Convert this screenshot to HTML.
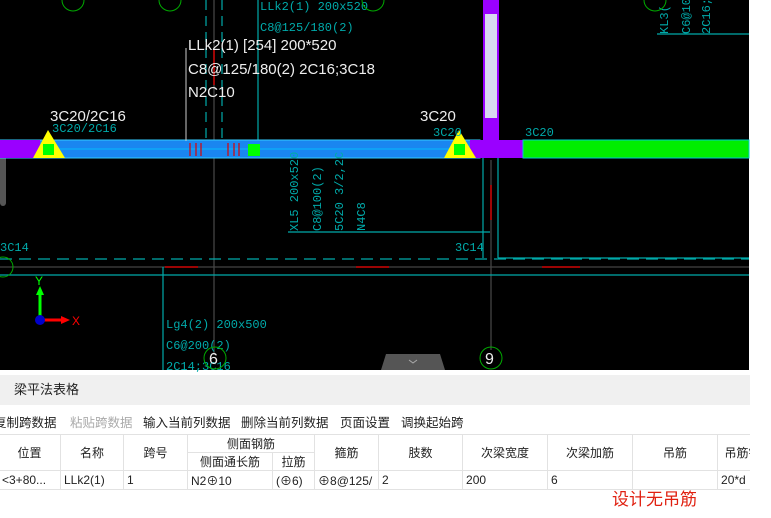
<html><head><style>
body{margin:0;width:771px;height:518px;overflow:hidden;background:#fff;font-family:"Liberation Sans","Noto Sans CJK SC",sans-serif;position:relative}
.cad{position:absolute;left:0;top:0}
.panel{position:absolute;left:0;top:372px;width:750px;height:146px;background:#fff;overflow:hidden}
.title{position:absolute;left:0;top:3px;width:750px;height:30px;background:#f0f0f0;font-size:13px;line-height:30px;color:#222}
.tb{position:absolute;top:40px;left:-6px;font-size:12.5px;color:#222;white-space:nowrap}
.tb span{position:absolute;top:0}
table{position:absolute;left:-2px;top:62px;width:769px;border-collapse:collapse;font-size:12px;color:#222;table-layout:fixed}
td{border:1px solid #e2e2e2;padding:0 3px;height:16px;text-align:center;white-space:nowrap;overflow:hidden}
tr.d td{height:19px;text-align:left}
</style></head><body>
<svg class="cad" width="771" height="372" font-family="Liberation Mono,monospace">
<rect width="749" height="370" fill="#000"/>
<rect x="0" y="148" width="6" height="58" rx="3" fill="#555"/>
<g stroke="#444" stroke-width="1.3"><line x1="214" y1="0" x2="214" y2="355"/><line x1="491" y1="160" x2="491" y2="350"/><line x1="0" y1="267" x2="749" y2="267"/></g>
<g stroke="#0aa" stroke-width="1.2" fill="none">
<line x1="206" y1="0" x2="206" y2="141" stroke-dasharray="10,6"/><line x1="222" y1="0" x2="222" y2="141" stroke-dasharray="10,6"/>
<line x1="258" y1="0" x2="258" y2="141"/>
<line x1="0" y1="259" x2="749" y2="259" stroke-dasharray="12,7"/>
<line x1="0" y1="275" x2="749" y2="275"/>
<line x1="163" y1="267" x2="163" y2="370"/>
<line x1="288" y1="232" x2="490" y2="232"/>
<line x1="483" y1="158" x2="483" y2="258"/><line x1="498" y1="158" x2="498" y2="258"/><line x1="498" y1="258" x2="749" y2="258"/>
<line x1="657" y1="34" x2="749" y2="34"/>
</g>
<g stroke="#c00" stroke-width="1.5"><line x1="214" y1="50" x2="214" y2="85"/><line x1="491" y1="185" x2="491" y2="220"/><line x1="165" y1="267" x2="198" y2="267"/><line x1="356" y1="267" x2="389" y2="267"/><line x1="542" y1="267" x2="580" y2="267"/></g>
<rect x="0" y="140" width="480" height="18" fill="#1a86f0" stroke="#3cf"/>
<line x1="0" y1="149" x2="480" y2="149" stroke="#0cf" stroke-width="0.8"/>
<rect x="0" y="140" width="40" height="18" fill="#9a00ff"/>
<rect x="470" y="140" width="53" height="18" fill="#9a00ff"/>
<rect x="483" y="0" width="16" height="141" fill="#9a00ff"/>
<rect x="485" y="14" width="12" height="104" fill="#d8d8f0"/>
<rect x="523" y="140" width="226" height="18" fill="#00ee00" stroke="#0cc"/>
<g stroke="#d00" stroke-width="1.2"><line x1="190" y1="143" x2="190" y2="156"/><line x1="196" y1="143" x2="196" y2="156"/><line x1="201" y1="143" x2="201" y2="156"/><line x1="228" y1="143" x2="228" y2="156"/><line x1="234" y1="143" x2="234" y2="156"/><line x1="239" y1="143" x2="239" y2="156"/></g>
<rect x="248" y="144" width="12" height="12" fill="#0f0"/>
<polygon points="48,130 33,158 65,158" fill="#ff0"/><rect x="43" y="144" width="11" height="11" fill="#0f0"/>
<polygon points="459,130 444,158 476,158" fill="#ff0"/><rect x="454" y="144" width="11" height="11" fill="#0f0"/>
<line x1="186" y1="48" x2="186" y2="141" stroke="#ccc"/>
<g fill="#eee" font-family="Liberation Sans,sans-serif" font-size="15"><text x="188" y="50">LLk2(1) [254] 200*520</text><text x="188" y="74">C8@125/180(2) 2C16;3C18</text><text x="188" y="97">N2C10</text><text x="50" y="121">3C20/2C16</text><text x="420" y="121">3C20</text></g>
<g fill="#0aa" font-size="12"><text x="52" y="132">3C20/2C16</text><text x="433" y="136">3C20</text><text x="525" y="136">3C20</text><text x="260" y="10">LLk2(1) 200x520</text><text x="260" y="31">C8@125/180(2)</text><text x="0" y="251">3C14</text><text x="455" y="251">3C14</text><text x="166" y="328">Lg4(2) 200x500</text><text x="166" y="349">C6@200(2)</text><text x="166" y="370">2C14;3C16</text>
<g transform="rotate(-90)"><text x="-231" y="298">XL5 200x520</text><text x="-231" y="321">C8@100(2)</text><text x="-231" y="343">5C20 3/2,2C</text><text x="-231" y="365">N4C8</text><text x="-34" y="668">KL3(</text><text x="-34" y="690">C6@10</text><text x="-34" y="710">2C16;</text></g></g>
<g fill="none" stroke="#0a0"><circle cx="73" cy="0" r="11"/><circle cx="170" cy="0" r="11"/><circle cx="373" cy="0" r="11"/><circle cx="655" cy="0" r="11"/><circle cx="215" cy="358" r="11"/><circle cx="491" cy="358" r="11"/><circle cx="3" cy="267" r="10"/></g>
<g fill="#eee" font-family="Liberation Sans,sans-serif" font-size="16"><text x="209" y="364">6</text><text x="485" y="364">9</text></g>
<path d="M381 370 L386 354 L440 354 L445 370Z" fill="#555"/><path d="M409 360 l4 3 l4 -3" stroke="#aaa" fill="none"/>
<line x1="40" y1="319" x2="40" y2="290" stroke="#0f0" stroke-width="3"/><polygon points="40,286 36,295 44,295" fill="#0f0"/>
<line x1="40" y1="320" x2="64" y2="320" stroke="#f00" stroke-width="3"/><polygon points="70,320 61,316 61,324" fill="#f00"/>
<circle cx="40" cy="320" r="5" fill="#00c"/>
<text x="35" y="285" fill="#0f0" font-size="12" font-family="Liberation Sans">Y</text><text x="72" y="325" fill="#f00" font-size="12" font-family="Liberation Sans">X</text>
</svg>
<div class="panel">
<div class="title"><span style="position:absolute;left:14px">梁平法表格</span></div>
<div class="tb"><span style="left:0">复制跨数据</span><span style="left:76px;color:#aaa">粘贴跨数据</span><span style="left:149px">输入当前列数据</span><span style="left:247px">删除当前列数据</span><span style="left:346px">页面设置</span><span style="left:407px">调换起始跨</span></div>
<table>
<colgroup><col style="width:62px"><col style="width:63px"><col style="width:64px"><col style="width:85px"><col style="width:42px"><col style="width:64px"><col style="width:84px"><col style="width:85px"><col style="width:85px"><col style="width:85px"><col style="width:50px"></colgroup>
<tr><td rowspan="2">位置</td><td rowspan="2">名称</td><td rowspan="2">跨号</td><td colspan="2">侧面钢筋</td><td rowspan="2">箍筋</td><td rowspan="2">肢数</td><td rowspan="2">次梁宽度</td><td rowspan="2">次梁加筋</td><td rowspan="2">吊筋</td><td rowspan="2">吊筋锚</td></tr>
<tr><td>侧面通长筋</td><td>拉筋</td></tr>
<tr class="d"><td>&lt;3+80...</td><td>LLk2(1)</td><td>1</td><td>N2⊕10</td><td>(⊕6)</td><td>⊕8@125/</td><td>2</td><td>200</td><td>6</td><td></td><td>20*d</td></tr>
</table>
<div style="position:absolute;left:612px;top:113px;color:#e02010;font-size:17px">设计无吊筋</div>
</div>
</body></html>
